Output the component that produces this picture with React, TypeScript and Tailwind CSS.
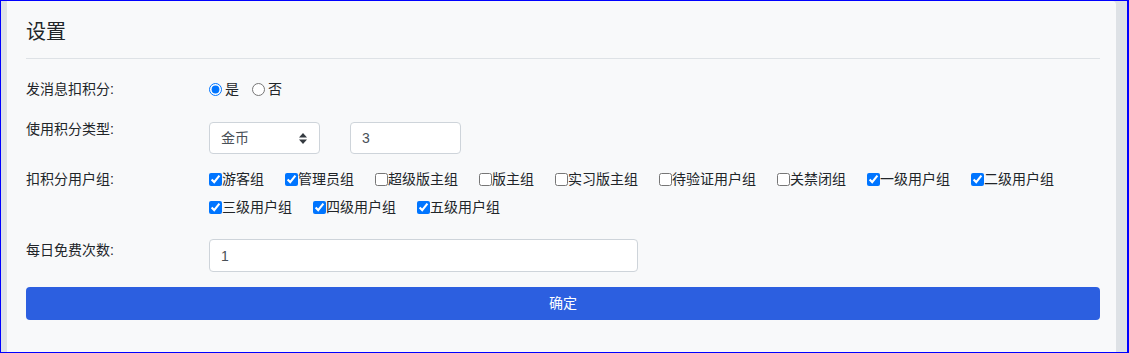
import { useState } from "react";

const GROUPS = [
  { name: "游客组", checked: true },
  { name: "管理员组", checked: true },
  { name: "超级版主组", checked: false },
  { name: "版主组", checked: false },
  { name: "实习版主组", checked: false },
  { name: "待验证用户组", checked: false },
  { name: "关禁闭组", checked: false },
  { name: "一级用户组", checked: true },
  { name: "二级用户组", checked: true },
  { name: "三级用户组", checked: true },
  { name: "四级用户组", checked: true },
  { name: "五级用户组", checked: true },
];

export default function App() {
  const [deduct, setDeduct] = useState("yes");
  const [groups, setGroups] = useState(GROUPS);
  const [amount, setAmount] = useState("3");
  const [free, setFree] = useState("1");

  function toggle(i: number) {
    setGroups((g) => g.map((x, j) => (j === i ? { ...x, checked: !x.checked } : x)));
  }

  return (
    <div
      className="h-[353px] w-[1129px] overflow-hidden border-t border-l border-b border-r-2 border-[#0000ff] bg-[#dee2e6] pl-[6px] pr-[11px] text-[14px] text-[#212529]"
      style={{ fontFamily: '"Liberation Sans", "Noto Sans CJK SC", sans-serif' }}
    >
      <div className="h-[400px] rounded-tr-[4px] bg-[#f8f9fa] pl-[19px] pr-[16px] pt-[19px]">
        {/* Header */}
        <h1 className="text-[20px] leading-[24px] font-normal">设置</h1>
        <hr className="mt-[14px] border-t border-[#dee2e6]" />

        {/* 发消息扣积分 */}
        <div className="mt-[18px] flex h-[24px] items-center">
          <div className="w-[183px] leading-5">发消息扣积分:</div>
          <label className="flex items-center leading-5">
            <input
              type="radio"
              name="deduct"
              checked={deduct === "yes"}
              onChange={() => setDeduct("yes")}
              className="m-0 h-[13px] w-[13px]"
            />
            <span className="ml-[3px]">是</span>
          </label>
          <label className="ml-[13px] flex items-center leading-5">
            <input
              type="radio"
              name="deduct"
              checked={deduct === "no"}
              onChange={() => setDeduct("no")}
              className="m-0 h-[13px] w-[13px]"
            />
            <span className="ml-[3px]">否</span>
          </label>
        </div>

        {/* 使用积分类型 */}
        <div className="mt-[18px] flex items-start">
          <div className="w-[183px] leading-5">使用积分类型:</div>
          <div className="mt-[3px] flex gap-[30px]">
            <div className="relative flex h-[32px] w-[111px] items-center rounded-[4px] border border-[#ced4da] bg-white pl-[11px] text-[#495057]">
              金币
              <svg className="absolute right-[12px] top-[10px]" width="8" height="11" viewBox="0 0 8 11">
                <path d="M4 0 L8 4.5 H0 Z" fill="#343a40" />
                <path d="M4 11 L8 6.5 H0 Z" fill="#343a40" />
              </svg>
            </div>
            <input
              value={amount}
              onChange={(e) => setAmount(e.target.value)}
              className="h-[32px] w-[111px] rounded-[4px] border border-[#ced4da] bg-white px-[11px] text-[#495057] outline-none"
            />
          </div>
        </div>

        {/* 扣积分用户组 */}
        <div className="mt-[11px] flex items-start">
          <div className="w-[183px] leading-[28px]">扣积分用户组:</div>
          <div className="flex flex-1 flex-wrap gap-x-[21px]">
            {groups.map((g, i) => (
              <label key={g.name} className="flex h-[28px] items-center">
                <input
                  type="checkbox"
                  checked={g.checked}
                  onChange={() => toggle(i)}
                  className="m-0 h-[13px] w-[13px]"
                />
                <span>{g.name}</span>
              </label>
            ))}
          </div>
        </div>

        {/* 每日免费次数 */}
        <div className="mt-[18px] flex items-start">
          <div className="w-[183px] pt-[1px] leading-5">每日免费次数:</div>
          <input
            value={free}
            onChange={(e) => setFree(e.target.value)}
            className="h-[33px] w-[429px] rounded-[4px] border border-[#ced4da] bg-white px-[11px] text-[#495057] outline-none"
          />
        </div>

        <button className="mt-[15px] h-[33px] w-full rounded-[4px] bg-[#2c5fe0] text-[14px] text-white">
          确定
        </button>
      </div>
    </div>
  );
}
